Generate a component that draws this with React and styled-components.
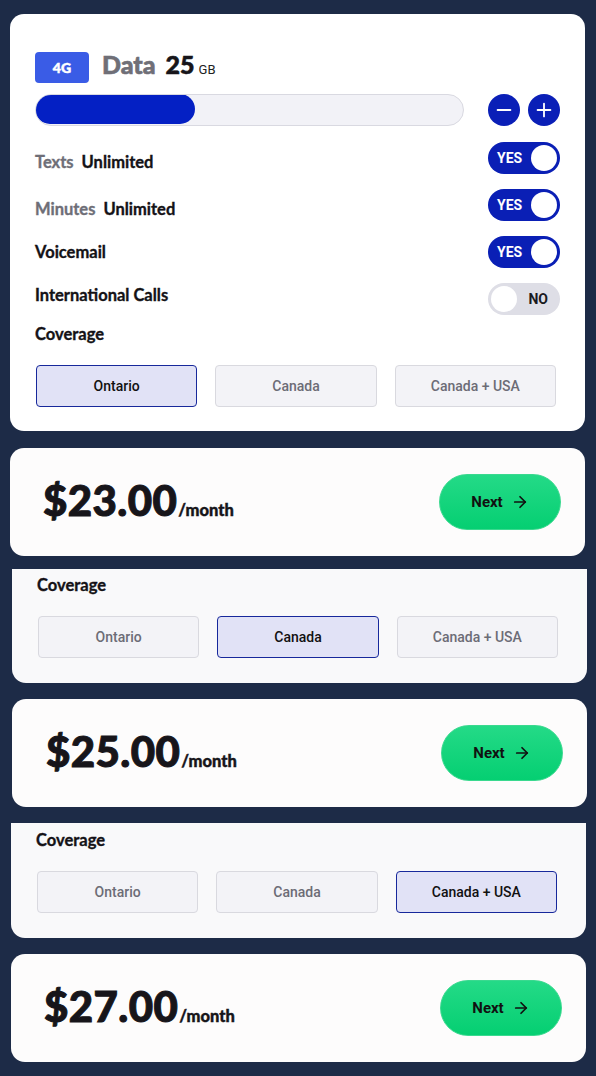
import React from "react";
import styled, { createGlobalStyle } from "styled-components";
import { ArrowRight, Minus, Plus } from "lucide-react";

const Global = createGlobalStyle`
  html, body { margin: 0; padding: 0; background: #1d2b47; }
  body { font-family: "Lato", "Noto Sans", sans-serif; }
  * { box-sizing: border-box; }
`;

const Page = styled.div`
  display: flex;
  flex-direction: column;
  padding-top: 14px;
  min-height: 1076px;
  background: #1d2b47;
`;

const Card = styled.div`
  width: 575px;
  margin-left: ${(p) => p.$x}px;
  margin-top: ${(p) => p.$top || 0}px;
  background: ${(p) => (p.$soft ? "#f9f9fa" : "#fdfcfc")};
  border-radius: ${(p) => (p.$squareTop ? "0 0 14px 14px" : "14px")};
`;

const PlanCard = styled(Card)`
  padding: 38px 25px 24px 25px;
  display: flex;
  flex-direction: column;
  background: #ffffff;
`;

const Header = styled.div`
  display: flex;
  align-items: center;
  height: 31px;
`;

const Badge = styled.div`
  width: 54px;
  height: 31px;
  border-radius: 4px;
  background: #3a5ce6;
  color: #fff;
  font-family: "Lato", sans-serif;
  font-weight: 900;
  font-size: 14px;
  -webkit-text-stroke: 0.5px #fff;
  display: flex;
  align-items: center;
  justify-content: center;
  margin-right: 13px;
`;

const Title = styled.div`
  display: flex;
  align-items: baseline;
  line-height: 1;
  margin-bottom: 6px;
`;

const DataLabel = styled.span`
  font-weight: 900;
  font-size: 25px;
  color: #6f6f77;
  -webkit-text-stroke: 0.6px #6f6f77;
  margin-right: 10px;
`;

const DataValue = styled.span`
  font-weight: 900;
  font-size: 25px;
  color: #17151a;
  -webkit-text-stroke: 0.6px #17151a;
  margin-right: 4px;
`;

const Unit = styled.span`
  font-family: "Roboto", sans-serif;
  font-size: 13px;
  color: #222;
`;

const SliderRow = styled.div`
  display: flex;
  align-items: center;
  margin-top: 11px;
`;

const Track = styled.div`
  flex: 1;
  height: 32px;
  border-radius: 16px;
  background: #f2f2f7;
  border: 1px solid #d9d9e1;
  overflow: hidden;
  margin-right: 24px;
`;

const Fill = styled.div`
  height: 100%;
  border-radius: 16px;
  background: #0420c4;
  margin: -1px;
`;

const RoundBtn = styled.button`
  width: 32px;
  height: 32px;
  border-radius: 50%;
  border: none;
  background: #0a1fb7;
  color: #fff;
  display: flex;
  align-items: center;
  justify-content: center;
  padding: 0;
  margin-left: ${(p) => p.$gap || 0}px;
`;

const Rows = styled.div`
  display: flex;
  flex-direction: column;
  gap: 15px;
  margin-top: 16px;
`;

const Row = styled.div`
  display: flex;
  justify-content: space-between;
  align-items: flex-start;
  height: 32px;
`;

const Label = styled.div`
  display: flex;
  gap: 8px;
  font-size: 16.5px;
  line-height: 20px;
  font-weight: 700;
  color: #141216;
  -webkit-text-stroke: 0.35px currentColor;
  padding-top: ${(p) => p.$dy}px;
`;

const Muted = styled.span`
  color: #6e6e77;
`;

const Toggle = styled.div`
  width: 72px;
  height: 32px;
  border-radius: 16px;
  background: ${(p) => (p.$on ? "#0a1fb5" : "#dedee6")};
  display: flex;
  flex-direction: ${(p) => (p.$on ? "row" : "row-reverse")};
  align-items: center;
  justify-content: space-between;
  padding: 0 ${(p) => (p.$on ? 3 : 12)}px 0 ${(p) => (p.$on ? 9 : 3)}px;
`;

const ToggleText = styled.span`
  font-family: "Roboto", sans-serif;
  font-weight: 700;
  font-size: 14px;
  color: ${(p) => (p.$on ? "#fff" : "#1a1a1f")};
`;

const Knob = styled.span`
  width: 26px;
  height: 26px;
  border-radius: 50%;
  background: #fff;
`;

const CoverageTitle = styled.div`
  font-size: 16.5px;
  line-height: 20px;
  font-weight: 700;
  color: #141216;
  -webkit-text-stroke: 0.35px currentColor;
  margin-top: ${(p) => p.$top || 0}px;
`;

const Options = styled.div`
  display: grid;
  grid-template-columns: repeat(3, 1fr);
  column-gap: 18px;
  margin: 21px ${(p) => p.$r}px 0 ${(p) => p.$l}px;
`;

const Option = styled.div`
  height: 42px;
  border-radius: 4px;
  display: flex;
  align-items: center;
  justify-content: center;
  font-family: "Roboto", sans-serif;
  font-weight: 500;
  font-size: 14px;
  background: ${(p) => (p.$active ? "#e1e2f6" : "#f3f3f7")};
  border: 1px solid ${(p) => (p.$active ? "#17289b" : "#d9d9df")};
  color: ${(p) => (p.$active ? "#111" : "#6c6c76")};
`;

const PriceCard = styled(Card)`
  height: 108px;
  display: flex;
  align-items: center;
  justify-content: space-between;
  padding: 0 24px 0 ${(p) => p.$pl}px;
`;

const Price = styled.div`
  display: flex;
  align-items: baseline;
  color: #17151a;
  margin-top: -4px;
`;

const Amount = styled.span`
  font-weight: 900;
  font-size: 42px;
  letter-spacing: 0.4px;
  -webkit-text-stroke: 1px #17151a;
`;

const Per = styled.span`
  font-weight: 900;
  font-size: 16.5px;
  -webkit-text-stroke: 0.4px #17151a;
  margin-left: 1px;
`;

const NextBtn = styled.button`
  width: 122px;
  height: 56px;
  border-radius: 28px;
  border: 1px solid #3ad98f;
  background: linear-gradient(180deg, #24da87 0%, #05cf72 100%);
  display: flex;
  align-items: center;
  justify-content: center;
  gap: 8px;
  font-family: "Roboto", sans-serif;
  font-weight: 700;
  font-size: 15px;
  color: #111;
  padding: 0;
`;

const CoverageCard = styled(Card)`
  padding: ${(p) => p.$pt}px 0 25px 25px;
`;

function Coverage({ active, l, r }) {
  const opts = ["Ontario", "Canada", "Canada + USA"];
  return (
    <Options $l={l} $r={r}>
      {opts.map((o) => (
        <Option key={o} $active={o === active}>
          {o}
        </Option>
      ))}
    </Options>
  );
}

function PriceBlock({ amount, x, top, pl }) {
  return (
    <PriceCard $x={x} $top={top} $pl={pl}>
      <Price>
        <Amount>{amount}</Amount>
        <Per>/month</Per>
      </Price>
      <NextBtn>
        Next <ArrowRight size={18} strokeWidth={2.3} />
      </NextBtn>
    </PriceCard>
  );
}

function Switch({ on }) {
  return (
    <Toggle $on={on}>
      <ToggleText $on={on}>{on ? "YES" : "NO"}</ToggleText>
      <Knob />
    </Toggle>
  );
}

export default function App() {
  return (
    <>
      <Global />
      <Page>
        <PlanCard $x={10}>
          <Header>
            <Badge>4G</Badge>
            <Title>
              <DataLabel>Data</DataLabel>
              <DataValue>25</DataValue>
              <Unit>GB</Unit>
            </Title>
          </Header>
          <SliderRow>
            <Track>
              <Fill style={{ width: "37.5%" }} />
            </Track>
            <RoundBtn>
              <Minus size={22} strokeWidth={2} />
            </RoundBtn>
            <RoundBtn $gap={8}>
              <Plus size={22} strokeWidth={2} />
            </RoundBtn>
          </SliderRow>
          <Rows>
            <Row>
              <Label $dy={10}>
                <Muted>Texts</Muted>
                <span>Unlimited</span>
              </Label>
              <Switch on />
            </Row>
            <Row>
              <Label $dy={10}>
                <Muted>Minutes</Muted>
                <span>Unlimited</span>
              </Label>
              <Switch on />
            </Row>
            <Row>
              <Label $dy={6}>Voicemail</Label>
              <Switch on />
            </Row>
            <Row>
              <Label $dy={2}>International Calls</Label>
              <Switch />
            </Row>
          </Rows>
          <CoverageTitle $top={9}>Coverage</CoverageTitle>
          <Coverage active="Ontario" l={1} r={4} />
        </PlanCard>

        <PriceBlock amount="$23.00" x={10} top={17} pl={33} />

        <CoverageCard $x={12} $top={13} $squareTop $soft $pt={6}>
          <CoverageTitle>Coverage</CoverageTitle>
          <Coverage active="Canada" l={1} r={29} />
        </CoverageCard>

        <PriceBlock amount="$25.00" x={12} top={16} pl={34} />

        <CoverageCard $x={11} $top={16} $squareTop $soft $pt={7}>
          <CoverageTitle>Coverage</CoverageTitle>
          <Coverage active="Canada + USA" l={1} r={29} />
        </CoverageCard>

        <PriceBlock amount="$27.00" x={11} top={16} pl={33} />
      </Page>
    </>
  );
}
